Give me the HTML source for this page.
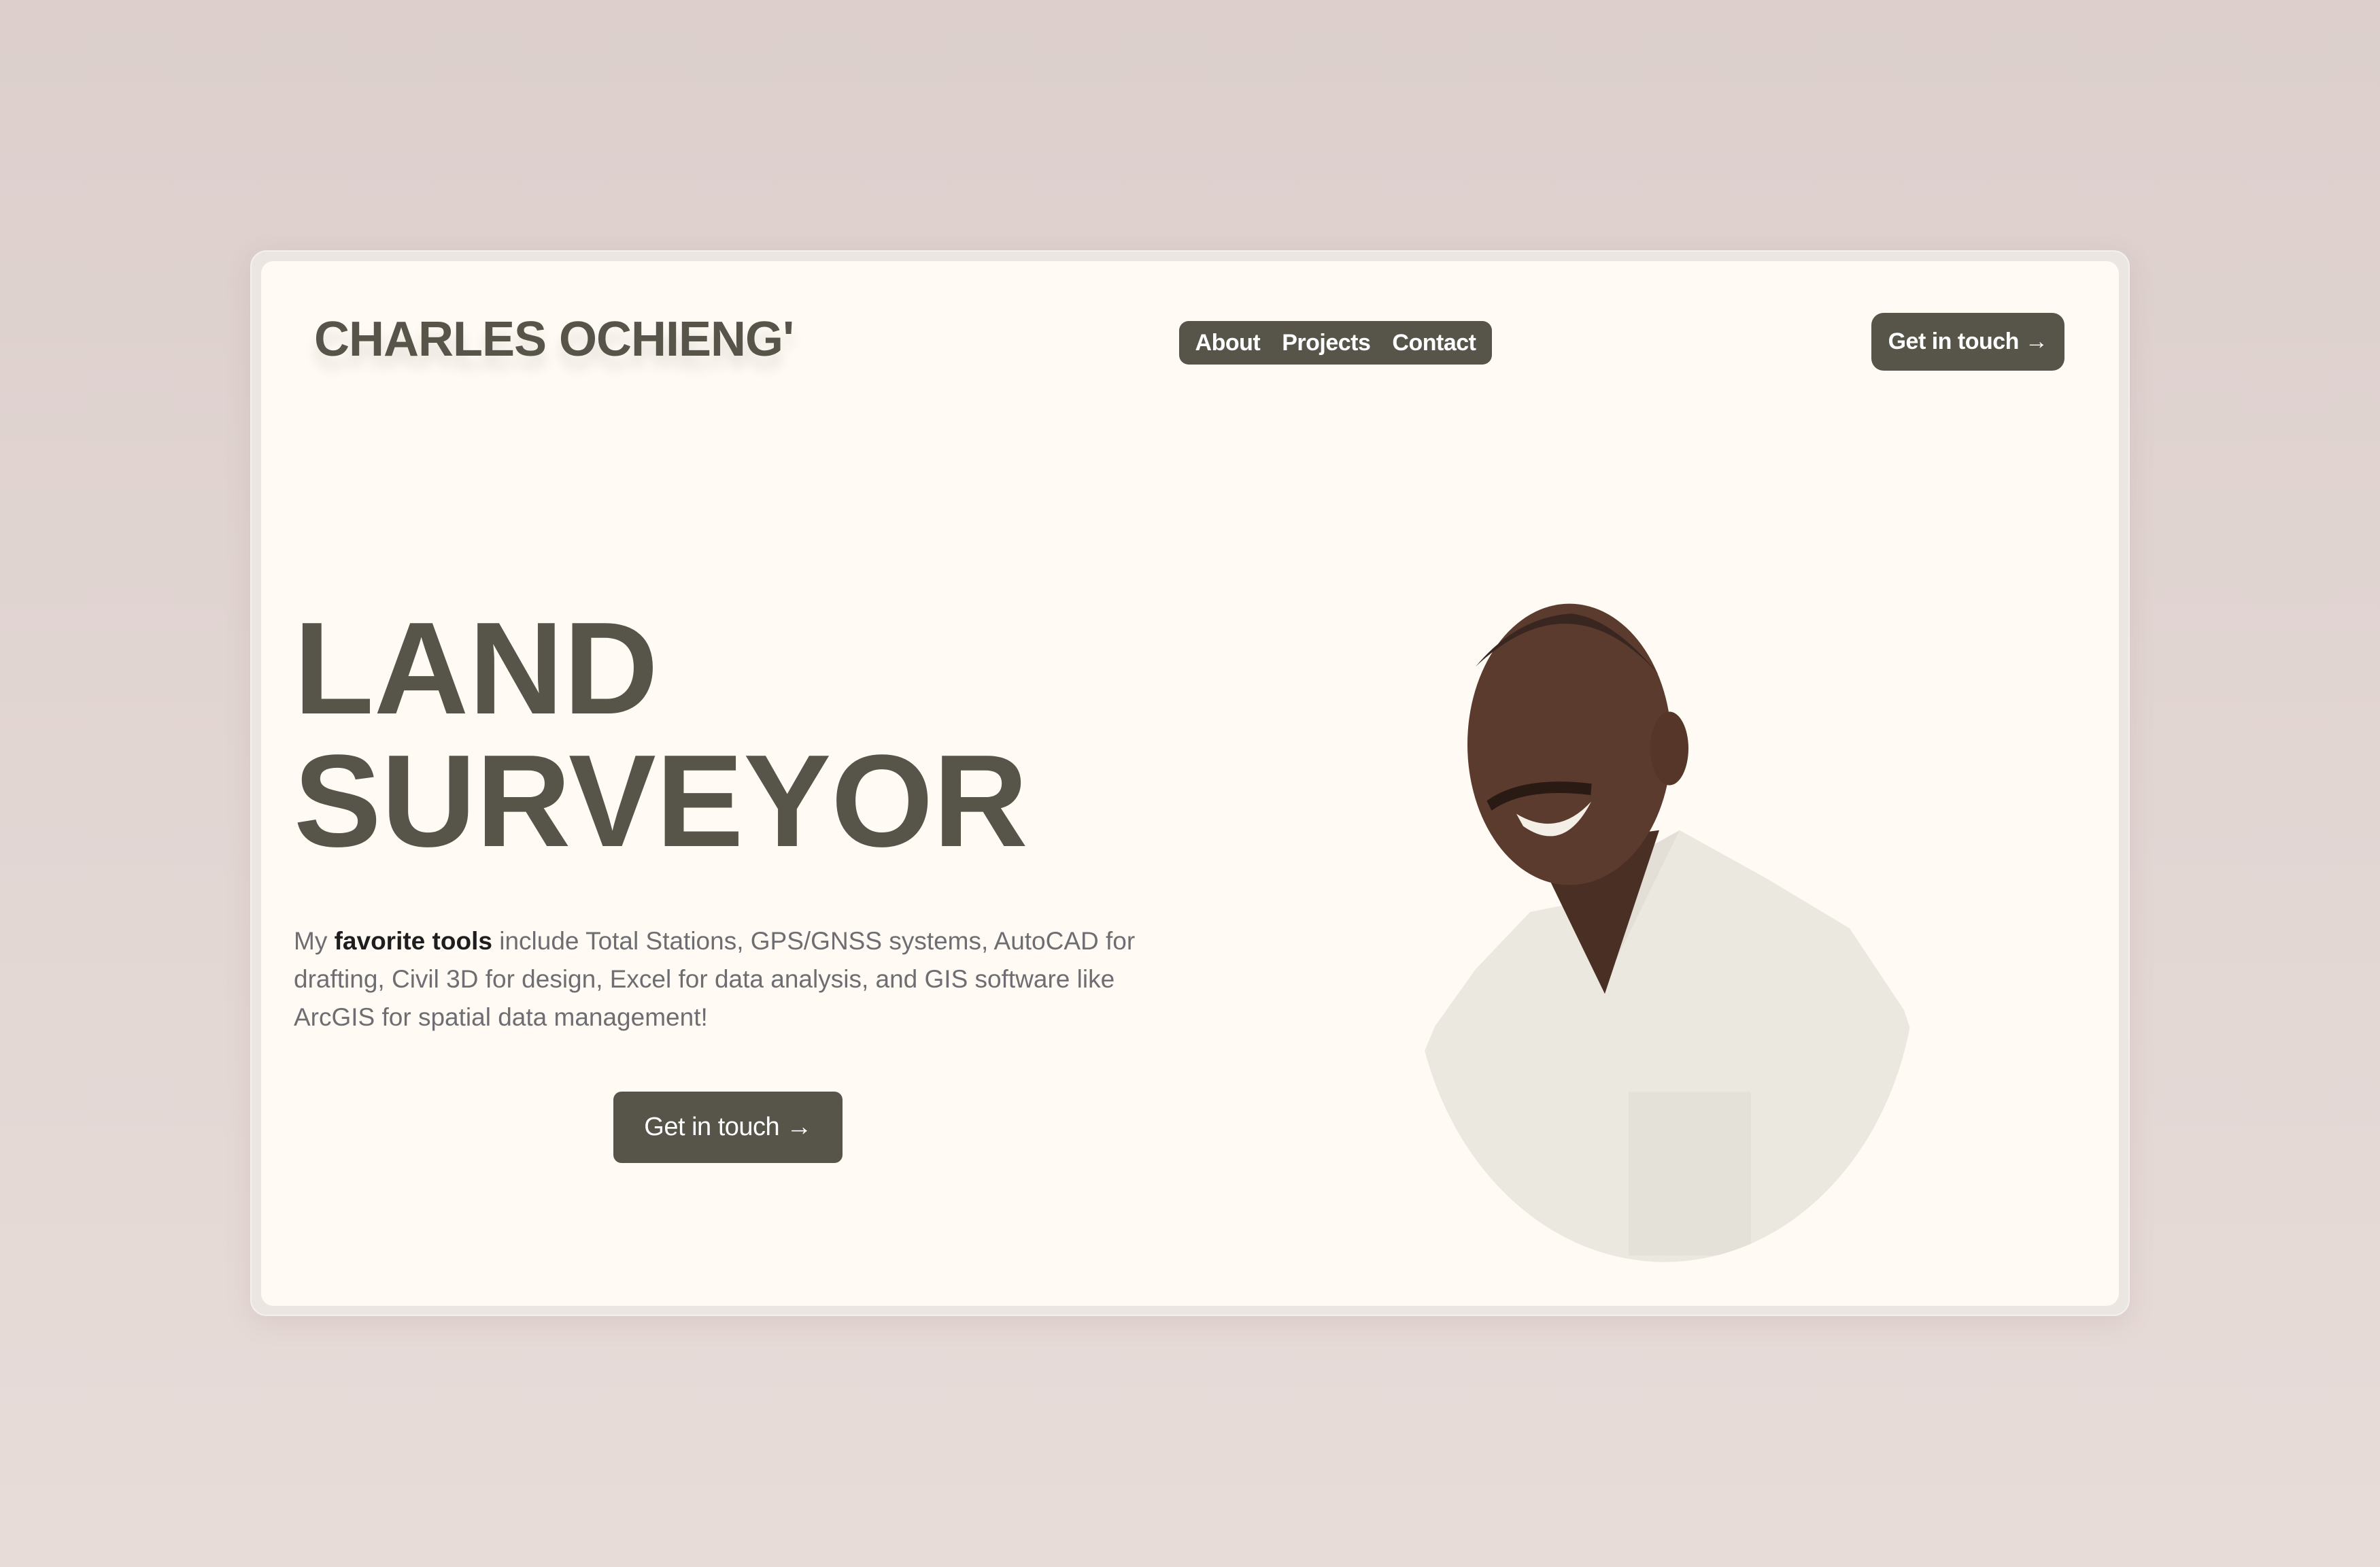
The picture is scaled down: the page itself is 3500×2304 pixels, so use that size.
<!DOCTYPE html>
<html><head><meta charset="utf-8"><style>
*{margin:0;padding:0;box-sizing:border-box}
body{width:3500px;height:2304px;background:linear-gradient(180deg,#dccfcc 0%,#e2d6d3 50%,#e8dcd9 100%);font-family:"Liberation Sans",sans-serif;position:relative;overflow:hidden}
.outer{position:absolute;left:368px;top:368px;width:2764px;height:1567px;background:#ece6e3;border-radius:24px;box-shadow:0 10px 40px rgba(120,90,80,.12);border:2px solid #f4f0ee}
.inner{position:absolute;left:384px;top:384px;width:2732px;height:1536px;background:#fffaf4;border-radius:18px}
.logo{position:absolute;left:462px;top:458px;font-size:72px;font-weight:700;color:#57544a;letter-spacing:-1px;text-shadow:0 18px 18px rgba(0,0,0,.10);white-space:nowrap}
.nav{position:absolute;left:1734px;top:472px;width:460px;height:64px;background:#57544a;border-radius:14px;color:#fff;font-size:34px;font-weight:700;display:flex;align-items:center;justify-content:center;gap:32px;letter-spacing:-.5px}
.btn{position:absolute;background:#57544a;color:#fff;display:flex;align-items:center;justify-content:center;letter-spacing:-.5px}
h1{position:absolute;left:432px;top:885px;font-size:193px;line-height:195px;font-weight:700;color:#57544a;letter-spacing:0}
p{position:absolute;left:432px;top:1356px;width:1300px;font-size:37px;line-height:56px;color:#6e6e72}
p b{color:#1e1e1e}
</style></head><body>
<div class="outer"></div>
<div class="inner"></div>
<div class="logo">CHARLES OCHIENG'</div>
<div class="nav"><span>About</span><span>Projects</span><span>Contact</span></div>
<div class="btn" style="left:2752px;top:460px;width:284px;height:85px;border-radius:18px;font-size:34px;font-weight:700">Get in touch →</div>
<h1>LAND<br>SURVEYOR</h1>
<p>My <b>favorite tools</b> include Total Stations, GPS/GNSS systems, AutoCAD for drafting, Civil 3D for design, Excel for data analysis, and GIS software like ArcGIS for spatial data management!</p>
<div class="btn" style="left:902px;top:1605px;width:337px;height:105px;border-radius:12px;font-size:38px">Get in touch →</div>
<svg style="position:absolute;left:2040px;top:860px" width="840" height="1010" viewBox="0 0 840 840" preserveAspectRatio="none">
<defs><clipPath id="c"><ellipse cx="408" cy="458" rx="370" ry="370"/></clipPath></defs>
<g clip-path="url(#c)">
<path d="M20 640 L70 540 L130 470 L210 400 L270 390 L330 360 L430 300 L560 360 L680 420 L760 520 L800 620 L800 1000 L20 1000Z" fill="#ebe8df"/>
<path d="M330 470 L430 300 L300 360Z" fill="#e3dfd6"/>
<rect x="355" y="620" width="180" height="200" fill="#e4e1d8"/>
</g>
<path d="M215 320 L400 300 L320 500 Z" fill="#4a2f24"/>
<ellipse cx="268" cy="195" rx="150" ry="172" fill="#5b3b2d"/>
<path d="M130 100 Q270 -10 400 110 Q330 40 270 35 Q190 40 130 100Z" fill="#3a2620"/>
<ellipse cx="415" cy="200" rx="28" ry="45" fill="#553628"/>
<path d="M190 280 Q250 310 300 265 Q260 330 200 295Z" fill="#f4efe6"/>
<path d="M150 270 Q200 240 300 250" stroke="#2a1a14" stroke-width="14" fill="none"/>
</svg>
</body></html>
